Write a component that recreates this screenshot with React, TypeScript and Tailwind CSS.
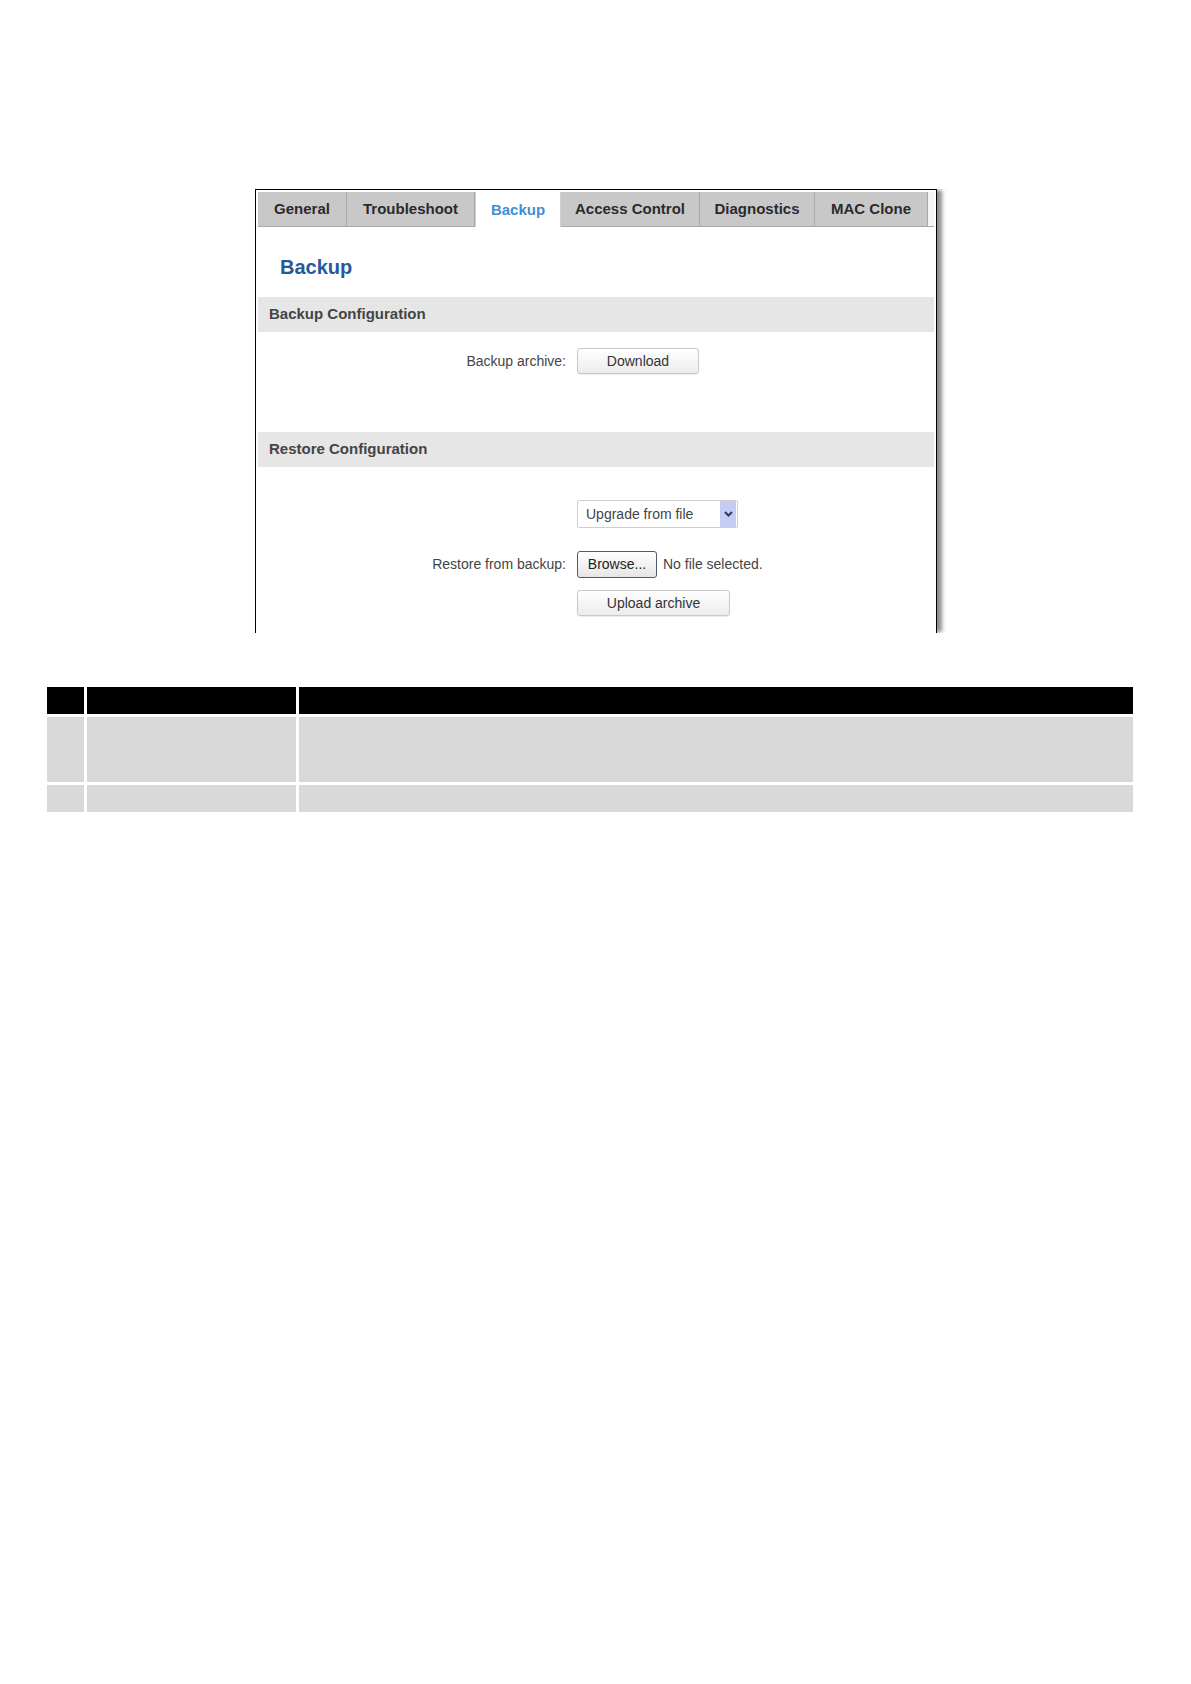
import React from "react";

type Tab = { label: string; width: string; active?: boolean };

const tabs: Tab[] = [
  { label: "General", width: "w-[89px]" },
  { label: "Troubleshoot", width: "w-[128px]" },
  { label: "Backup", width: "w-[86px]", active: true },
  { label: "Access Control", width: "w-[139px]" },
  { label: "Diagnostics", width: "w-[115px]" },
  { label: "MAC Clone", width: "w-[113px]" },
];

const font = "font-['Liberation_Sans',Arial,sans-serif]";

const SectionBar = ({ title }: { title: string }) => (
  <div className="h-[35px] bg-[#e6e6e6] flex items-center pl-[11px] text-[15px] font-bold text-[#444]">
    {title}
  </div>
);

const Row = ({ label, children }: { label?: string; children: React.ReactNode }) => (
  <div className="flex items-center">
    <div className="w-[308px] text-right text-[14px] text-[#444]">{label}</div>
    <div className="ml-[11px] flex items-center">{children}</div>
  </div>
);

const GrayButton = ({ children, width }: { children: React.ReactNode; width: string }) => (
  <button
    type="button"
    className={`${width} h-[26px] rounded-[3px] border border-[#c9c9c9] bg-gradient-to-b from-white to-[#ececec] text-[14px] text-[#333] shadow-[0_1px_1px_rgba(0,0,0,0.08)]`}
  >
    {children}
  </button>
);

const App = () => {
  return (
    <div className={`${font} bg-white w-[1191px] h-[1684px] pt-[189px]`}>
      {/* router window, cut off at the bottom; wrapper clips the shadow to the right side */}
      <div className="ml-[255px] w-[692px] pr-[10px] overflow-hidden">
        <div className="w-[682px] h-[444px] border border-b-0 border-black pt-[2px] px-[2px] shadow-[6px_0_4px_-1px_rgba(0,0,0,0.45)] bg-white">
          <div className="flex h-[35px]">
            {tabs.map((t) =>
              t.active ? (
                <div
                  key={t.label}
                  className={`${t.width} h-[35px] bg-white border-x border-[#d0d0d0] flex items-center justify-center pt-[1px] text-[15px] font-bold text-[#3f8fd2]`}
                >
                  {t.label}
                </div>
              ) : (
                <div
                  key={t.label}
                  className={`${t.width} h-[35px] bg-[#c8c8c8] border-r border-b border-[#a9a9a9] flex items-center justify-center pt-[1px] text-[15px] font-bold text-[#2b2b2b]`}
                >
                  {t.label}
                </div>
              )
            )}
            <div className="flex-1 border-b border-[#a9a9a9] bg-[#f4f4f4]" />
          </div>

          <div className="h-[70px] pl-[22px] pt-[28px]">
            <h2 className="text-[20px] leading-[24px] font-bold text-[#28589a]">Backup</h2>
          </div>

          <SectionBar title="Backup Configuration" />
          <div className="pt-[16px] h-[100px]">
            <Row label="Backup archive:">
              <GrayButton width="w-[122px]">Download</GrayButton>
            </Row>
          </div>

          <SectionBar title="Restore Configuration" />
          <div className="pt-[33px] flex flex-col">
            <Row>
              <div className="w-[161px] h-[28px] border border-[#cfcfcf] rounded-[2px] flex items-center bg-white">
                <span className="flex-1 pl-[8px] text-[14px] text-[#444]">Upgrade from file</span>
                <span className="w-[16px] h-[26px] mr-[1px] bg-[#c5ccf3] flex items-center justify-center">
                  <svg width="9" height="6" viewBox="0 0 9 6">
                    <path d="M1 1 L4.5 4.5 L8 1" fill="none" stroke="#2c3a66" strokeWidth="2" />
                  </svg>
                </span>
              </div>
            </Row>
            <div className="mt-[23px]">
              <Row label="Restore from backup:">
                <button
                  type="button"
                  className="w-[80px] h-[27px] rounded-[3px] border border-[#4d5b70] bg-gradient-to-b from-white to-[#e6e6e6] text-[14px] text-[#222]"
                >
                  Browse...
                </button>
                <span className="ml-[6px] text-[14px] text-[#444]">No file selected.</span>
              </Row>
            </div>
            <div className="mt-[12px]">
              <Row>
                <GrayButton width="w-[153px]">Upload archive</GrayButton>
              </Row>
            </div>
          </div>
        </div>
      </div>

      {/* table */}
      <div className="ml-[47px] mt-[54px] w-[1086px] flex flex-col gap-[3px]">
        <div className="grid grid-cols-[37px_209px_1fr] gap-[3px] h-[27px]">
          <div className="bg-black" />
          <div className="bg-black" />
          <div className="bg-black" />
        </div>
        <div className="grid grid-cols-[37px_209px_1fr] gap-[3px] h-[65px]">
          <div className="bg-[#d9d9d9]" />
          <div className="bg-[#d9d9d9]" />
          <div className="bg-[#d9d9d9]" />
        </div>
        <div className="grid grid-cols-[37px_209px_1fr] gap-[3px] h-[27px]">
          <div className="bg-[#d9d9d9]" />
          <div className="bg-[#d9d9d9]" />
          <div className="bg-[#d9d9d9]" />
        </div>
      </div>
    </div>
  );
};

export default App;
